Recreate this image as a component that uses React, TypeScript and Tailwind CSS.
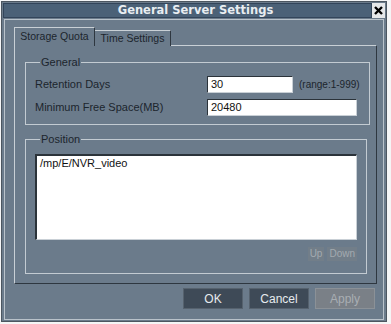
export default function App() {
  const label = "text-[11px] text-[#1c252d] leading-[13px]";
  const tab = "text-[10.5px] text-[#1c252d] leading-[13px]";
  return (
    <div className="w-[391px] h-[324px] bg-[#f4f5f6] overflow-hidden" style={{ fontFamily: '"Liberation Sans", Arial, sans-serif' }}>
      <div className="ml-[1px] mt-[1px] w-[386px] h-[321px] border border-[#4c5660] bg-[#6b7b8b] p-[1px] flex flex-col">
        {/* title row */}
        <div className="flex h-[15px]">
          <div
            className="flex-1 bg-[#4b6177] border border-[#33455a] flex items-center justify-center pl-[16px] text-[11.5px] font-bold text-[#e8edf1] leading-none"
            style={{ fontFamily: '"DejaVu Sans", sans-serif' }}
          >
            General Server Settings
          </div>
          <div className="w-[13px] bg-[#e6e8ea] flex items-center justify-center">
            <svg width="9" height="9" viewBox="0 0 9 9">
              <path d="M1 1 L8 8 M8 1 L1 8" stroke="#000" strokeWidth="2.4" />
            </svg>
          </div>
        </div>

        {/* body */}
        <div className="flex-1 mt-[1px] mx-[1px] border border-[#b9c2ca] pl-[9px] pr-[7px] pt-[7px] flex flex-col">
          {/* tabs */}
          <div className="flex items-end h-[19px]">
            <div className={`w-[81px] h-[19px] border-t border-l border-r border-t-[#c9d0d6] border-l-[#c9d0d6] border-r-[#2e3740] flex items-center justify-center pb-[1px] ${tab}`}>
              Storage Quota
            </div>
            <div className={`w-[76px] h-[16px] border-t border-r border-t-[#c9d0d6] border-r-[#2e3740] flex items-center justify-center ${tab}`}>
              Time Settings
            </div>
            <div className="flex-1 border-b border-[#c9d0d6]" />
          </div>

          {/* panel */}
          <div className="w-[363px] h-[238px] border-l border-r border-b border-l-[#c9d0d6] border-r-[#2e3740] border-b-[#2e3740] pl-[10px] pr-[9px] pt-[10px]">
            <fieldset className="border border-[#c3cbd2] pl-[9px] pr-[9px] pt-[7px] pb-[8px]">
              <legend className={`ml-[5px] px-[1px] ${label}`}>General</legend>
              <div className="flex items-center h-[17px]">
                <div className={`w-[172px] ${label}`}>Retention Days</div>
                <div className="w-[86px] h-[17px] bg-white border-t border-l border-t-[#2b333a] border-l-[#2b333a] border-b border-r border-b-[#c9d0d6] border-r-[#c9d0d6] px-[3px] text-[11px] leading-[15px] text-[#111]">30</div>
                <div className="ml-[6px] whitespace-nowrap text-[10px] text-[#1c252d]">(range:1-999)</div>
              </div>
              <div className="flex items-center h-[17px] mt-[6px]">
                <div className={`w-[172px] ${label}`}>Minimum Free Space(MB)</div>
                <div className="w-[150px] h-[17px] bg-white border-t border-l border-t-[#2b333a] border-l-[#2b333a] border-b border-r border-b-[#c9d0d6] border-r-[#c9d0d6] px-[3px] text-[11px] leading-[15px] text-[#111]">20480</div>
              </div>
            </fieldset>

            <fieldset className="mt-[8px] border border-[#c3cbd2] pl-[9px] pr-[9px] pt-[8px] pb-[12px]">
              <legend className={`ml-[5px] px-[1px] ${label}`}>Position</legend>
              <div className="w-[322px] h-[86px] bg-white border-t-2 border-l-2 border-t-[#2b333a] border-l-[#2b333a] border-b border-r border-b-[#c9d0d6] border-r-[#c9d0d6] pl-[3px] pt-[1px] text-[11px] leading-[13px] text-[#111]">
                /mp/E/NVR_video
              </div>
              <div className="flex justify-end gap-[3px] mt-[7px] w-[322px]">
                <div className="px-[2px] h-[14px] bg-[#727e89] text-[10px] leading-[14px] text-[#a3aab0]">Up</div>
                <div className="px-[2px] h-[14px] bg-[#727e89] text-[10px] leading-[14px] text-[#a3aab0]">Down</div>
              </div>
            </fieldset>
          </div>

          {/* buttons */}
          <div className="flex justify-end gap-[6px] mt-[4px] pr-[1px]">
            <div className="w-[60px] h-[21px] bg-[#3e4a57] border border-[#56626e] flex items-center justify-center text-[12px] text-[#e6eaee]">OK</div>
            <div className="w-[60px] h-[21px] bg-[#3e4a57] border border-[#56626e] flex items-center justify-center text-[12px] text-[#e6eaee]">Cancel</div>
            <div className="w-[60px] h-[21px] bg-[#7a8087] border border-[#8b9197] flex items-center justify-center text-[12px] text-[#a9aeb3]">Apply</div>
          </div>
        </div>
      </div>
    </div>
  );
}
